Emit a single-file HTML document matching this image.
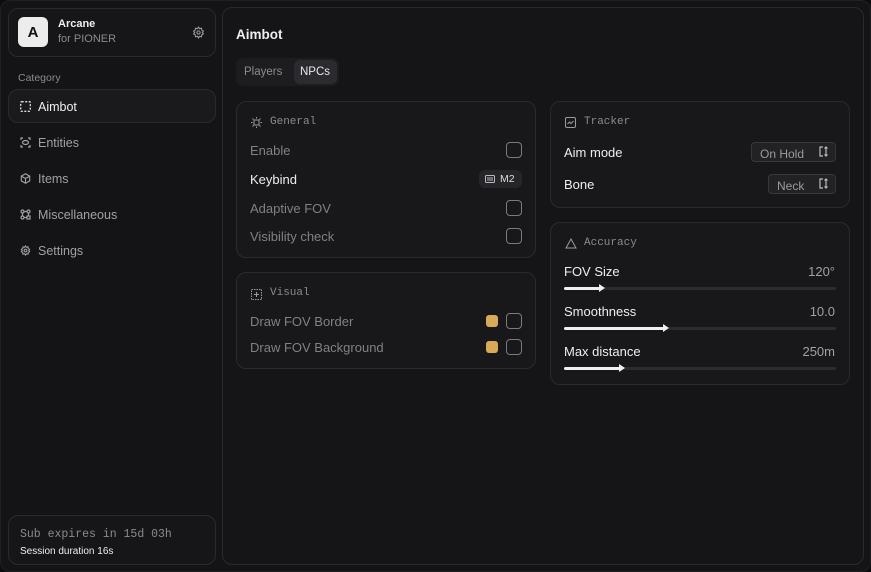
<!DOCTYPE html>
<html><head><style>
*{box-sizing:border-box;margin:0;padding:0}
body{width:871px;height:572px;background:#0c0c0e;font-family:"Liberation Sans",sans-serif;position:relative;overflow:hidden;color:#e8e8ea}
.abs{position:absolute}
.frame{left:0;top:0;width:871px;height:572px;background:#141416;border-radius:10px;border:1px solid #202023}
.card{position:absolute;border:1px solid #2a2a2e;border-radius:10px;background:#18181b}
.mono{font-family:"Liberation Mono",monospace}
.t{position:absolute;font-size:13px;white-space:nowrap}
.cb{position:absolute;width:16px;height:16px;border:1px solid #7a7a80;border-radius:4px}
.sw{position:absolute;width:12px;height:12px;background:#d9aa55;border-radius:3px}
.track{position:absolute;height:3px;background:#2c2c30;border-radius:2px;left:13px;width:272px}
.fill{position:absolute;left:0;top:0;height:3px;background:#f0f0f0;border-radius:2px}
.knob{position:absolute;top:-3px;width:0;height:0;border-top:4px solid transparent;border-bottom:4px solid transparent;border-left:6px solid #f0f0f0}
.sel{position:absolute;height:20px;border:1px solid #38383c;border-radius:4px;background:#222225;font-size:12px;color:#9a9aa0;padding:4px 0 0 8px}
.nav{position:absolute;left:20px;font-size:12.5px;color:#a0a0a6}
</style></head><body>
<div class="abs frame"></div>
<div class="card" style="left:8px;top:8px;width:208px;height:49px;background:#161618"></div>
<div class="abs" style="left:18px;top:17px;width:30px;height:30px;background:#ececec;border-radius:6px;color:#111;font-weight:bold;font-size:15px;text-align:center;line-height:31px">A</div>
<div class="t" style="left:58px;top:18px;font-size:11px;font-weight:bold;color:#eee">Arcane</div>
<div class="t" style="left:58px;top:33px;font-size:11px;color:#8a8a90">for PIONER</div>
<svg class="abs" style="left:192px;top:26px" width="13" height="13" viewBox="0 0 24 24" fill="none" stroke="#9a9aa0" stroke-width="2"><circle cx="12" cy="12" r="3"/><path d="M12 2l2 3 3.5-1 .5 3.5 3 2-2 2.5 2 2.5-3 2-.5 3.5-3.5-1-2 3-2-3-3.5 1-.5-3.5-3-2 2-2.5-2-2.5 3-2 .5-3.5 3.5 1z"/></svg>
<div class="t" style="left:18px;top:72px;font-size:10.5px;color:#8a8a90">Category</div>
<div class="card" style="left:8px;top:89px;width:208px;height:34px;background:#1a1a1d"></div>
<svg class="abs" style="left:20px;top:101px" width="11" height="11" viewBox="0 0 11 11" fill="none" stroke="#ddd" stroke-width="1.3" stroke-dasharray="2 1.5"><rect x=".7" y=".7" width="9.6" height="9.6" rx="1"/></svg>
<div class="nav" style="left:38px;top:100px;color:#f0f0f0">Aimbot</div>
<svg class="abs" style="left:20px;top:137px" width="11" height="11" viewBox="0 0 11 11" fill="none" stroke="#a0a0a6" stroke-width="1.2"><path d="M1 3V1h2M8 1h2v2M10 8v2H8M3 10H1V8"/><ellipse cx="5.5" cy="5.5" rx="3" ry="2"/></svg>
<div class="nav" style="left:38px;top:136px">Entities</div>
<svg class="abs" style="left:20px;top:173px" width="11" height="11" viewBox="0 0 12 12" fill="none" stroke="#a0a0a6" stroke-width="1.2"><path d="M6 .8l4.6 2.6v5.2L6 11.2 1.4 8.6V3.4z M1.4 3.4L6 6l4.6-2.6M6 6v5.2"/></svg>
<div class="nav" style="left:38px;top:172px">Items</div>
<svg class="abs" style="left:20px;top:209px" width="11" height="11" viewBox="0 0 11 11" fill="none" stroke="#a0a0a6" stroke-width="1.2"><circle cx="2.5" cy="2.5" r="1.5"/><circle cx="8.5" cy="2.5" r="1.5"/><circle cx="2.5" cy="8.5" r="1.5"/><rect x="7" y="7" width="3" height="3"/><path d="M4 2.5h3M2.5 4v3M4 8.5h3M8.5 4v3"/></svg>
<div class="nav" style="left:38px;top:208px">Miscellaneous</div>
<svg class="abs" style="left:20px;top:245px" width="11" height="11" viewBox="0 0 24 24" fill="none" stroke="#a0a0a6" stroke-width="2.4"><circle cx="12" cy="12" r="3"/><path d="M12 2l2 3 3.5-1 .5 3.5 3 2-2 2.5 2 2.5-3 2-.5 3.5-3.5-1-2 3-2-3-3.5 1-.5-3.5-3-2 2-2.5-2-2.5 3-2 .5-3.5 3.5 1z"/></svg>
<div class="nav" style="left:38px;top:244px">Settings</div>
<div class="card" style="left:8px;top:515px;width:208px;height:50px;background:#161618"></div>
<div class="t mono" style="left:20px;top:528px;font-size:11.5px;color:#8a8a90">Sub expires in 15d 03h</div>
<div class="t" style="left:20px;top:546px;font-size:10px;color:#eee">Session duration 16s</div>
<div class="card" style="left:222px;top:7px;width:642px;height:558px;background:#151517"></div>
<div class="t" style="left:236px;top:27px;font-size:13.5px;font-weight:bold;color:#eee">Aimbot</div>
<div class="abs" style="left:236px;top:58px;width:103px;height:28px;background:#1d1d20;border-radius:7px"></div>
<div class="t" style="left:244px;top:66px;font-size:11.5px;color:#8a8a90">Players</div>
<div class="abs" style="left:294px;top:60px;width:43px;height:24px;background:#2b2b2f;border-radius:6px"></div>
<div class="t" style="left:300px;top:66px;font-size:11.5px;color:#e8e8ea">NPCs</div>

<div class="card" style="left:236px;top:101px;width:300px;height:157px"></div>
<svg class="abs" style="left:251px;top:117px" width="11" height="11" viewBox="0 0 11 11" fill="none" stroke="#9a9aa0" stroke-width="1"><rect x="3" y="3" width="5" height="5"/><path d="M5.5 0v1.5M5.5 9.5V11M0 5.5h1.5M9.5 5.5H11M1.5 1.5l1 1M8.5 8.5l1 1M9.5 1.5l-1 1M1.5 9.5l1-1"/></svg>
<div class="t mono" style="left:270px;top:116px;font-size:11px;color:#8a8a90">General</div>
<div class="t" style="left:250px;top:143px;color:#808086">Enable</div>
<div class="cb" style="left:506px;top:142px"></div>
<div class="t" style="left:250px;top:172px;color:#eee">Keybind</div>
<div class="abs" style="left:479px;top:170px;width:43px;height:18px;background:#26262a;border-radius:6px"></div>
<svg class="abs" style="left:485px;top:175px" width="10" height="8" viewBox="0 0 10 8" fill="none" stroke="#bbb" stroke-width="1"><rect x=".5" y=".5" width="9" height="7" rx="1"/><path d="M2 3h6M2 5h6"/></svg>
<div class="t" style="left:500px;top:173px;font-size:10.5px;color:#ddd">M2</div>
<div class="t" style="left:250px;top:201px;color:#808086">Adaptive FOV</div>
<div class="cb" style="left:506px;top:200px"></div>
<div class="t" style="left:250px;top:229px;color:#808086">Visibility check</div>
<div class="cb" style="left:506px;top:228px"></div>

<div class="card" style="left:236px;top:272px;width:300px;height:97px"></div>
<svg class="abs" style="left:251px;top:289px" width="11" height="11" viewBox="0 0 11 11" fill="none" stroke="#9a9aa0" stroke-width="1" stroke-dasharray="1.5 1"><rect x=".5" y=".5" width="10" height="10"/><path d="M5.5 3v5M3 5.5h5" stroke-dasharray="none"/></svg>
<div class="t mono" style="left:270px;top:287px;font-size:11px;color:#8a8a90">Visual</div>
<div class="t" style="left:250px;top:314px;color:#808086">Draw FOV Border</div>
<div class="sw" style="left:486px;top:315px"></div><div class="cb" style="left:506px;top:313px"></div>
<div class="t" style="left:250px;top:340px;color:#808086">Draw FOV Background</div>
<div class="sw" style="left:486px;top:341px"></div><div class="cb" style="left:506px;top:339px"></div>

<div class="card" style="left:550px;top:101px;width:300px;height:107px"></div>
<svg class="abs" style="left:565px;top:117px" width="11" height="11" viewBox="0 0 11 11" fill="none" stroke="#9a9aa0" stroke-width="1"><rect x=".5" y=".5" width="10" height="10" rx="1.5"/><path d="M2.5 7l2-2 1.5 1.5 2.5-2.5"/></svg>
<div class="t mono" style="left:584px;top:116px;font-size:11px;color:#8a8a90">Tracker</div>
<div class="t" style="left:564px;top:145px;color:#eee">Aim mode</div>
<div class="sel" style="left:751px;top:142px;width:85px">On Hold</div>
<div class="t" style="left:564px;top:177px;color:#eee">Bone</div>
<div class="sel" style="left:768px;top:174px;width:68px">Neck</div>
<svg class="abs" style="left:819px;top:146px" width="10" height="11" viewBox="0 0 10 11" fill="none" stroke="#bbb" stroke-width="1.2"><path d="M4 1H1v9h3M7 1v9M5.5 2.5L7 1l1.5 1.5M5.5 8.5L7 10l1.5-1.5"/></svg>
<svg class="abs" style="left:819px;top:178px" width="10" height="11" viewBox="0 0 10 11" fill="none" stroke="#bbb" stroke-width="1.2"><path d="M4 1H1v9h3M7 1v9M5.5 2.5L7 1l1.5 1.5M5.5 8.5L7 10l1.5-1.5"/></svg>

<div class="card" style="left:550px;top:222px;width:300px;height:163px"></div>
<svg class="abs" style="left:565px;top:238px" width="12" height="11" viewBox="0 0 12 11" fill="none" stroke="#9a9aa0" stroke-width="1"><path d="M6 1L1 10h10z"/></svg>
<div class="t mono" style="left:584px;top:237px;font-size:11px;color:#8a8a90">Accuracy</div>
<div class="t" style="left:564px;top:264px;color:#eee">FOV Size</div>
<div class="t" style="right:36px;top:264px;color:#a0a0a6">120°</div>
<div class="track" style="left:564px;top:287px"><div class="fill" style="width:36px"></div><div class="knob" style="left:35px"></div></div>
<div class="t" style="left:564px;top:304px;color:#eee">Smoothness</div>
<div class="t" style="right:36px;top:304px;color:#a0a0a6">10.0</div>
<div class="track" style="left:564px;top:327px"><div class="fill" style="width:100px"></div><div class="knob" style="left:99px"></div></div>
<div class="t" style="left:564px;top:344px;color:#eee">Max distance</div>
<div class="t" style="right:36px;top:344px;color:#a0a0a6">250m</div>
<div class="track" style="left:564px;top:367px"><div class="fill" style="width:56px"></div><div class="knob" style="left:55px"></div></div>
</body></html>
